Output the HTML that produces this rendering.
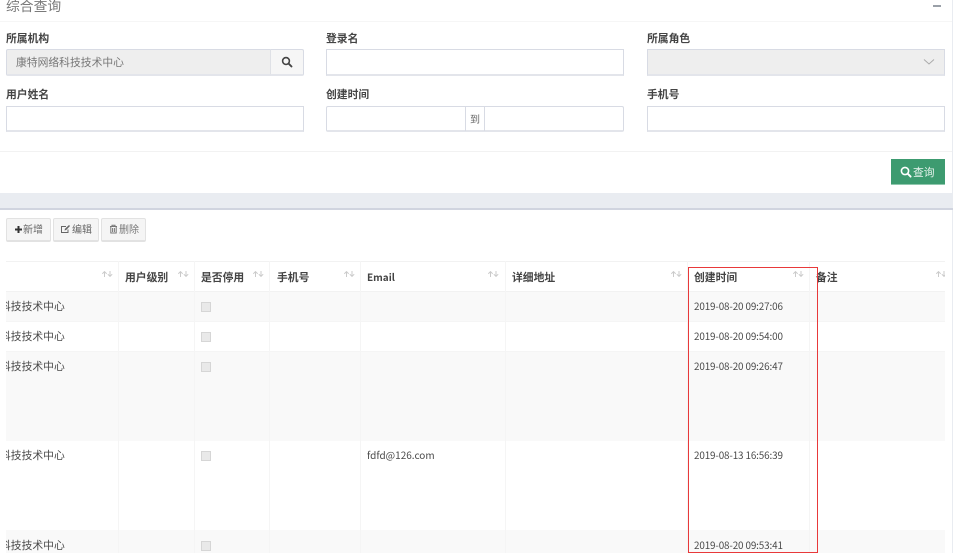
<!DOCTYPE html>
<html lang="zh">
<head>
<meta charset="utf-8">
<title>综合查询</title>
<style>
html,body{margin:0;padding:0;background:#fff}
body{position:relative;width:960px;height:556px;overflow:hidden;font-family:"Noto Sans CJK SC","Liberation Sans",sans-serif;font-size:10.8px;color:#555}
div,span,svg{position:absolute;box-sizing:border-box}
.t{white-space:nowrap;line-height:16px}
.lb{font-weight:700;color:#444;font-size:10.8px}
.in{background:#fff;border:1px solid #d8dbe4;border-bottom:2px solid #e3e5eb}
.h{height:1px;background:#f2f2f2}
.v{width:1px;top:261px;height:292px;background:#f5f5f5}
.th{font-weight:700;color:#444;top:269px;font-size:10.8px}
.d{color:#4a4a4a;font-size:9.9px;letter-spacing:-.13px;left:694px}
.c{left:0;font-size:10.8px;color:#4a4a4a}
.cb{left:201px;width:10px;height:10px;background:#e9e9e9;border:1px solid #d6d6d6}
.s{width:11px;height:6px;top:271px}
.b{top:218px;height:24px;background:#f5f5f5;border:1px solid #e2e2e2;border-bottom-width:2px;border-radius:2px}
</style>
</head>
<body>
<!-- right panel edge -->
<div style="left:952px;top:0;width:1px;height:194px;background:#e9ecf1"></div>
<div style="left:952px;top:210px;width:1px;height:343px;background:#e9ecf1"></div>

<!-- header -->
<div class="t" style="left:6px;top:-3px;font-size:13.8px;color:#7a7a7a">综合查询</div>
<div style="left:933px;top:5px;width:8px;height:2px;background:#9aa0a8"></div>
<div class="h" style="left:0;top:21px;width:952px;background:#f6f6f6"></div>

<!-- form row 1 -->
<div class="t lb" style="left:6px;top:30px">所属机构</div>
<div class="t lb" style="left:326px;top:30px">登录名</div>
<div class="t lb" style="left:647px;top:30px">所属角色</div>

<div class="in" style="left:6px;top:49px;width:265px;height:27px;background:#eee;border-radius:2px 0 0 2px"></div>
<div class="t" style="left:16px;top:54px;color:#777">康特网络科技技术中心</div>
<div class="in" style="left:270px;top:49px;width:34px;height:27px;background:#f6f6f6;border-left-color:#dfe1e6;border-radius:0 2px 2px 0"></div>
<svg style="left:281px;top:56px" width="12" height="12" viewBox="0 0 12 12"><circle cx="5" cy="5" r="3.4" fill="none" stroke="#444" stroke-width="1.6"/><path d="M7.6 7.6L10.5 10.5" stroke="#444" stroke-width="1.9" stroke-linecap="round"/></svg>

<div class="in" style="left:326px;top:49px;width:298px;height:27px"></div>

<div class="in" style="left:647px;top:49px;width:298px;height:27px;background:#eee"></div>
<svg style="left:923px;top:58px" width="12" height="8" viewBox="0 0 12 8"><path d="M1 1.5L6 6L11 1.5" fill="none" stroke="#aaa" stroke-width="1"/></svg>

<!-- form row 2 -->
<div class="t lb" style="left:6px;top:86px">用户姓名</div>
<div class="t lb" style="left:326px;top:86px">创建时间</div>
<div class="t lb" style="left:647px;top:86px">手机号</div>

<div class="in" style="left:6px;top:106px;width:298px;height:26px"></div>
<div class="in" style="left:326px;top:106px;width:298px;height:26px;border-radius:2px"></div>
<div style="left:465px;top:107px;width:1px;height:24px;background:#d8dbe4"></div>
<div style="left:484px;top:107px;width:1px;height:24px;background:#d8dbe4"></div>
<div class="t" style="left:470px;top:111px;color:#666;font-size:10px">到</div>
<div class="in" style="left:647px;top:106px;width:298px;height:26px"></div>

<div class="h" style="left:0;top:151px;width:952px"></div>

<!-- query button -->
<div style="left:891px;top:159px;width:54px;height:26px;background:#3d9b70;border-bottom:1px solid #8fc7ad"></div>
<svg style="left:900px;top:166px" width="12" height="12" viewBox="0 0 12 12"><circle cx="5" cy="5" r="3.6" fill="none" stroke="#fff" stroke-width="1.6"/><path d="M7.7 7.7L10.6 10.6" stroke="#fff" stroke-width="1.9" stroke-linecap="round"/></svg>
<div class="t" style="left:913px;top:164px;color:#e8f4ee">查询</div>

<!-- band -->
<div style="left:0;top:193px;width:953px;height:17px;background:#e9ecf1;border-bottom:2px solid #d0d4df"></div>

<!-- toolbar -->
<div class="b" style="left:6px;width:45px"></div>
<svg style="left:14px;top:225px" width="9" height="9" viewBox="0 0 9 9"><path d="M4.5 1V8M1 4.5H8" stroke="#333" stroke-width="2"/></svg>
<div class="t" style="left:23px;top:221px;color:#666;font-size:10px">新增</div>
<div class="b" style="left:53px;width:46px"></div>
<svg style="left:60px;top:224px" width="11" height="10" viewBox="0 0 11 10"><path d="M8 5.5V8.5H1.5V2.5H6" fill="none" stroke="#666" stroke-width="1"/><path d="M4.5 6.5L5 4.8L9 1L10 2L6.2 6Z" fill="#666"/></svg>
<div class="t" style="left:72px;top:221px;color:#666;font-size:10px">编辑</div>
<div class="b" style="left:101px;width:45px"></div>
<svg style="left:109px;top:224px" width="9" height="10" viewBox="0 0 9 10"><path d="M1 2.5H8M3 2.5V1.2H6V2.5M1.8 2.5V9H7.2V2.5M3.6 4V8M5.4 4V8" fill="none" stroke="#777" stroke-width="1"/></svg>
<div class="t" style="left:119px;top:221px;color:#777;font-size:10px">删除</div>

<!-- table -->
<div style="left:6px;top:291px;width:939px;height:30px;background:#f9f9f9"></div>
<div style="left:6px;top:351px;width:939px;height:90px;background:#f9f9f9"></div>
<div style="left:6px;top:530px;width:939px;height:23px;background:#f9f9f9"></div>

<div class="h" style="left:6px;top:261px;width:939px"></div>
<div class="h" style="left:6px;top:291px;width:939px"></div>
<div class="h" style="left:6px;top:321px;width:939px;background:#f5f5f5"></div>
<div class="h" style="left:6px;top:351px;width:939px;background:#f5f5f5"></div>

<div class="v" style="left:118px"></div>
<div class="v" style="left:194px"></div>
<div class="v" style="left:269px"></div>
<div class="v" style="left:360px"></div>
<div class="v" style="left:505px"></div>
<div class="v" style="left:687px"></div>
<div class="v" style="left:809px"></div>

<div class="t th" style="left:125px">用户级别</div>
<div class="t th" style="left:201px">是否停用</div>
<div class="t th" style="left:277px">手机号</div>
<div class="t th" style="left:367px;font-size:10px">Email</div>
<div class="t th" style="left:512px">详细地址</div>
<div class="t th" style="left:694px">创建时间</div>
<div class="t th" style="left:816px">备注</div>

<!-- sort icons -->
<svg class="s" style="left:102px" viewBox="0 0 11 6"><path d="M2.5 6V.6M.3 2.8L2.5 .6L4.7 2.8M8 0V5.4M5.8 3.2L8 5.4L10.2 3.2" fill="none" stroke="#cbcbcb" stroke-width="1"/></svg>
<svg class="s" style="left:178px" viewBox="0 0 11 6"><path d="M2.5 6V.6M.3 2.8L2.5 .6L4.7 2.8M8 0V5.4M5.8 3.2L8 5.4L10.2 3.2" fill="none" stroke="#cbcbcb" stroke-width="1"/></svg>
<svg class="s" style="left:253px" viewBox="0 0 11 6"><path d="M2.5 6V.6M.3 2.8L2.5 .6L4.7 2.8M8 0V5.4M5.8 3.2L8 5.4L10.2 3.2" fill="none" stroke="#cbcbcb" stroke-width="1"/></svg>
<svg class="s" style="left:344px" viewBox="0 0 11 6"><path d="M2.5 6V.6M.3 2.8L2.5 .6L4.7 2.8M8 0V5.4M5.8 3.2L8 5.4L10.2 3.2" fill="none" stroke="#cbcbcb" stroke-width="1"/></svg>
<svg class="s" style="left:488px" viewBox="0 0 11 6"><path d="M2.5 6V.6M.3 2.8L2.5 .6L4.7 2.8M8 0V5.4M5.8 3.2L8 5.4L10.2 3.2" fill="none" stroke="#cbcbcb" stroke-width="1"/></svg>
<svg class="s" style="left:671px" viewBox="0 0 11 6"><path d="M2.5 6V.6M.3 2.8L2.5 .6L4.7 2.8M8 0V5.4M5.8 3.2L8 5.4L10.2 3.2" fill="none" stroke="#cbcbcb" stroke-width="1"/></svg>
<svg class="s" style="left:793px" viewBox="0 0 11 6"><path d="M2.5 6V.6M.3 2.8L2.5 .6L4.7 2.8M8 0V5.4M5.8 3.2L8 5.4L10.2 3.2" fill="none" stroke="#cbcbcb" stroke-width="1"/></svg>
<div style="left:936px;top:271px;width:9px;height:6px;overflow:hidden"><svg style="left:0;top:0" width="11" height="6" viewBox="0 0 11 6"><path d="M2.5 6V.6M.3 2.8L2.5 .6L4.7 2.8M8 0V5.4M5.8 3.2L8 5.4L10.2 3.2" fill="none" stroke="#cbcbcb" stroke-width="1"/></svg></div>

<!-- clipped org column -->
<div style="left:6px;top:291px;width:100px;height:262px;overflow:hidden">
  <div class="t c" style="left:-6px;top:7px">科技技术中心</div>
  <div class="t c" style="left:-6px;top:37px">科技技术中心</div>
  <div class="t c" style="left:-6px;top:67px">科技技术中心</div>
  <div class="t c" style="left:-6px;top:156px">科技技术中心</div>
  <div class="t c" style="left:-6px;top:246px">科技技术中心</div>
</div>

<div class="cb" style="top:302px"></div>
<div class="cb" style="top:332px"></div>
<div class="cb" style="top:362px"></div>
<div class="cb" style="top:451px"></div>
<div style="left:0;top:530px;width:300px;height:23px;overflow:hidden"><div class="cb" style="top:11px"></div></div>

<div class="t" style="left:367px;top:447px;font-size:10px;color:#4a4a4a">fdfd@126.com</div>

<div class="t d" style="top:298px">2019-08-20 09:27:06</div>
<div class="t d" style="top:328px">2019-08-20 09:54:00</div>
<div class="t d" style="top:358px">2019-08-20 09:26:47</div>
<div class="t d" style="top:447px">2019-08-13 16:56:39</div>
<div class="t d" style="top:537px">2019-08-20 09:53:41</div>

<!-- red annotation -->
<div style="left:688px;top:267px;width:130px;height:286px;border:1px solid #e8393a"></div>
</body>
</html>
